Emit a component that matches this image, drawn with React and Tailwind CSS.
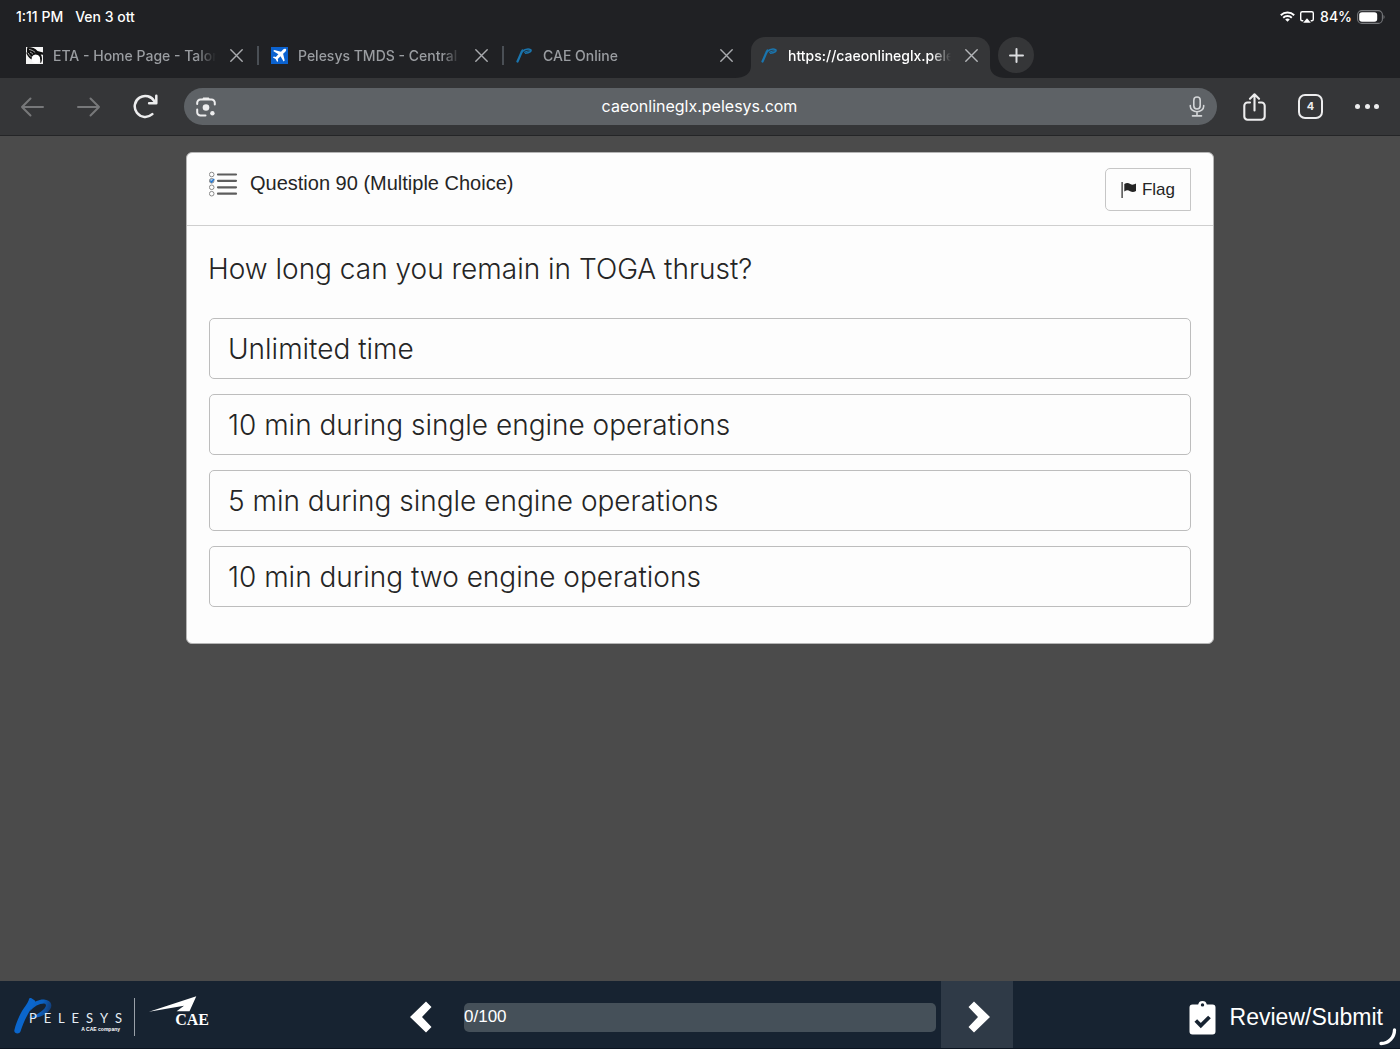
const tabs = [
  { title: 'ETA - Home Page - Talon', icon: 'eta', active: false, separator: true },
  { title: 'Pelesys TMDS - Central', icon: 'plane', active: false, separator: true },
  { title: 'CAE Online', icon: 'pelesys', active: false, separator: false },
  { title: 'https://caeonlineglx.pelesys', icon: 'pelesys', active: true, separator: false },
];

const answers = [
  'Unlimited time',
  '10 min during single engine operations',
  '5 min during single engine operations',
  '10 min during two engine operations',
];

function Favicon({ name }) {
  if (name === 'eta') {
    return (
      <svg className="size-[17px] shrink-0" viewBox="0 0 17 17" aria-hidden="true">
        <rect width="17" height="17" fill="#f4f4f4" />
        <path d="M1.500 0C6 0 9.500 1.500 11.500 4L17 5.500v2.300l-2.300-.2c1.600 2.300 1.800 5.400.3 8.400l-.8-.5C15 11 12.500 7.500 9.500 7.600 7 7.800 5.800 9.500 5.600 12.500 3 11 1 8.500 0 5l1.300 1.300C.8 4 .8 2 1.500 0z" fill="#111" />
        <path d="M3 2.500c2.500.3 4.700 1.500 6.200 3M2.200 6c1 2 2 3.200 3.400 4M4 5c1.200.6 2.200 1.300 3 2.300" stroke="#ccc" strokeWidth="0.800" fill="none" />
        <circle cx="9.900" cy="12" r="4.100" fill="#fff" />
      </svg>
    );
  }
  if (name === 'plane') {
    return (
      <svg className="size-[17px] shrink-0" viewBox="0 0 17 17" aria-hidden="true">
        <rect width="17" height="17" fill="#0b62cf" />
        <path d="M14.900 2.100c-.8-.7-2-.3-2.800.5L10 4.700 3.300 3 2.200 4l5.200 3.200-2.600 2.700-2-.4-.9.9 2.700 1.600 1.600 2.900.9-.9-.3-2.100 2.700-2.600 3.100 5.300 1.100-1.100-1.600-6.700 2.200-2.100c.8-.8 1.200-1.900.6-2.600z" fill="#fff" />
      </svg>
    );
  }
  return (
    <svg className="size-[17px] shrink-0" viewBox="0 0 17 17" fill="none" stroke="#1a75ae" strokeLinecap="round" aria-hidden="true">
      <path d="M1.500 14.500C3.200 11 4.500 7 6.500 3.500" strokeWidth="2.300" />
      <path d="M5.500 4.800C8.500 2.500 12.500 1.600 14.600 2.600c1.500 1.400-1.300 3.600-5 3.700" strokeWidth="1.600" />
      <path d="M8.500 5.300c2-1.200 3.500-1.700 5-1.600" strokeWidth="1.100" />
    </svg>
  );
}

function CloseIcon() {
  return (
    <svg className="size-[13px]" viewBox="0 0 13 13" fill="none" stroke="currentColor" strokeWidth="1.400" strokeLinecap="round" aria-hidden="true">
      <path d="M.8.8l11.400 11.400M12.200.8L.8 12.200" />
    </svg>
  );
}

function Tab({ tab }) {
  return (
    <div
      className={
        tab.active
          ? 'relative mr-[6px] flex h-[41px] w-[239px] shrink-0 items-center rounded-t-[14px] bg-[#353638] pr-3 pb-1 pl-[10px] text-white'
          : 'flex h-[41px] w-[245px] shrink-0 items-center pr-[2px] pb-1 pl-[10px] text-[#9a9da1]'
      }
    >
      {tab.active && (
        <>
          <svg className="absolute bottom-0 -left-4 h-3 w-4" viewBox="0 0 16 12" aria-hidden="true">
            <path d="M0 12C9 12 16 8 16 0v12z" fill="#353638" />
          </svg>
          <svg className="absolute -right-4 bottom-0 h-3 w-4" viewBox="0 0 16 12" aria-hidden="true">
            <path d="M16 12C7 12 0 8 0 0v12z" fill="#353638" />
          </svg>
        </>
      )}
      <Favicon name={tab.icon} />
      <a href="#tab" className="ml-[10px] w-[163px] shrink-0 overflow-hidden text-[14px] font-medium whitespace-nowrap [mask-image:linear-gradient(to_right,black_88%,transparent)]">
        {tab.title}
      </a>
      <button type="button" aria-label={'Close ' + tab.title} className={tab.active ? 'ml-[14px] text-[#b4b6b9]' : 'ml-[14px] text-[#a9abae]'}>
        <CloseIcon />
      </button>
      {tab.separator && <span className="ml-[14px] h-[19px] w-[2px] bg-[#4a4f55]" />}
    </div>
  );
}

function StatusBar() {
  return (
    <div className="flex h-[33px] items-center justify-between pr-[15px] pl-4 text-[14px] font-medium text-white">
      <div className="flex gap-3">
        <span>1:11 PM</span>
        <span>Ven 3 ott</span>
      </div>
      <div className="flex items-center">
        <svg className="h-[11px] w-[15px]" viewBox="0 0 15 11" fill="none" stroke="#fff" aria-hidden="true">
          <path d="M.8 4.200a9.600 9.600 0 0 1 13.400 0" strokeWidth="1.900" />
          <path d="M3.200 6.800a6.200 6.200 0 0 1 8.600 0" strokeWidth="1.900" />
          <path d="M7.500 10.800L5.200 8.600a3.300 3.300 0 0 1 4.600 0z" fill="#fff" stroke="none" />
        </svg>
        <svg className="ml-[5px] h-[12px] w-[14px]" viewBox="0 0 14 12" fill="none" aria-hidden="true">
          <path d="M3.300 9.700H2.200A1.500 1.500 0 0 1 .7 8.200v-6A1.500 1.500 0 0 1 2.200.7h9.600a1.500 1.500 0 0 1 1.500 1.500v6a1.500 1.500 0 0 1-1.500 1.500h-1.100" stroke="#fff" strokeWidth="1.400" />
          <path d="M7 7.300L10.800 11.800H3.200z" fill="#fff" />
        </svg>
        <span className="ml-[6px]">84%</span>
        <svg className="ml-[5px] h-[14px] w-[28px]" viewBox="0 0 28 14" aria-hidden="true">
          <rect x=".6" y=".6" width="24.800" height="12.800" rx="4.200" fill="none" stroke="#77797c" strokeWidth="1.100" />
          <rect x="2.200" y="2.200" width="18" height="9.600" rx="2.800" fill="#fff" />
          <path d="M26.500 5v4c1.400-.5 1.400-3.500 0-4z" fill="#77797c" />
        </svg>
      </div>
    </div>
  );
}

function Toolbar() {
  return (
    <div className="flex h-[58px] items-center border-b border-[#242527] bg-[#353638] pr-[21px] pl-[20px] text-[#ededee]">
      <button type="button" aria-label="Back" className="text-[#77787a]">
        <svg className="h-[20px] w-[25px]" viewBox="0 0 25 20" fill="none" stroke="currentColor" strokeWidth="2" strokeLinecap="round" strokeLinejoin="round" aria-hidden="true">
          <path d="M23 10H2M10.500 1.500L2 10l8.500 8.500" />
        </svg>
      </button>
      <button type="button" aria-label="Forward" className="ml-[31px] text-[#77787a]">
        <svg className="h-[20px] w-[25px]" viewBox="0 0 25 20" fill="none" stroke="currentColor" strokeWidth="2" strokeLinecap="round" strokeLinejoin="round" aria-hidden="true">
          <path d="M2 10h21M14.500 1.500L23 10l-8.500 8.500" />
        </svg>
      </button>
      <button type="button" aria-label="Reload" className="ml-[32px]">
        <svg className="size-[25px]" viewBox="0 0 25 25" fill="none" stroke="currentColor" strokeWidth="2.500" strokeLinecap="round" strokeLinejoin="round" aria-hidden="true">
          <path d="M19.300 20.200A10.500 10.500 0 1 1 21.500 7.500" />
          <path d="M23.300 1.800v7.500h-7.200" />
        </svg>
      </button>
      <div className="ml-[26px] flex h-[37px] flex-1 items-center rounded-full bg-[#5e6266] pr-[12px] pl-[12px]">
        <button type="button" aria-label="Search with camera">
          <svg className="size-[20px]" viewBox="0 0 20 20" fill="none" stroke="currentColor" strokeWidth="2" strokeLinecap="round" aria-hidden="true">
            <path d="M1.200 7V5.800a3.300 3.300 0 0 1 3.300-3.300h11a3.300 3.300 0 0 1 3.300 3.300V7.500M1.200 12.500v2.700a3.300 3.300 0 0 0 3.300 3.300H9.500" />
            <path d="M6 2.800L7.200.6h5.600L14 2.800z" fill="currentColor" stroke="none" />
            <circle cx="10" cy="10.500" r="3.300" fill="currentColor" stroke="none" />
            <circle cx="16.400" cy="16.300" r="2.200" fill="currentColor" stroke="none" />
          </svg>
        </button>
        <input
          type="text"
          aria-label="Address"
          defaultValue="caeonlineglx.pelesys.com"
          className="min-w-0 flex-1 bg-transparent pr-[6px] pb-[2px] text-center text-[16px] text-white outline-none"
        />
        <button type="button" aria-label="Voice search" className="text-[#d3d5d7]">
          <svg className="h-[21px] w-[16px]" viewBox="0 0 16 21" fill="none" stroke="currentColor" strokeWidth="1.600" strokeLinecap="round" aria-hidden="true">
            <rect x="4.800" y="1" width="6.400" height="12" rx="3.200" />
            <path d="M1.300 9.500v.8a6.700 5.500 0 0 0 13.400 0v-.8M8 16v3.700M3.500 19.900h9" />
          </svg>
        </button>
      </div>
      <button type="button" aria-label="Share" className="ml-[26px]">
        <svg className="h-[28px] w-[23px]" viewBox="0 0 23 28" fill="none" stroke="currentColor" strokeWidth="2.100" strokeLinecap="round" strokeLinejoin="round" aria-hidden="true">
          <path d="M7 9.500H4.500A3.200 3.200 0 0 0 1.300 12.700v10.800a3.200 3.200 0 0 0 3.200 3.200h14a3.200 3.200 0 0 0 3.200-3.200V12.700a3.200 3.200 0 0 0-3.200-3.200H16M11.500 17.500V1.500M7 5.800l4.500-4.500L16 5.800" />
        </svg>
      </button>
      <button type="button" aria-label="4 open tabs" className="ml-[32px] flex size-[25px] items-center justify-center rounded-[7px] border-2 border-[#ededee] text-[11px] font-bold">
        4
      </button>
      <button type="button" aria-label="Menu" className="ml-[32px] flex w-[24px] justify-between">
        <span className="size-[5px] rounded-full bg-[#ededee]" />
        <span className="size-[5px] rounded-full bg-[#ededee]" />
        <span className="size-[5px] rounded-full bg-[#ededee]" />
      </button>
    </div>
  );
}

function QuestionIcon() {
  return (
    <svg className="mt-[18px] h-[26px] w-[30px] shrink-0" viewBox="0 0 30 26" fill="none" aria-hidden="true">
      <g stroke="#8b8b8b" strokeWidth="1">
        <circle cx="2.700" cy="3.500" r="2.300" />
        <circle cx="2.700" cy="9.800" r="2.300" fill="#9cc9f5" />
        <circle cx="2.700" cy="16.300" r="2.300" />
        <circle cx="2.700" cy="22.700" r="2.300" />
      </g>
      <path d="M1.300 9.600l1.300 1.600 2.600-3.300" stroke="#2877cc" strokeWidth="1.400" />
      <path d="M9 3.500h18M9 9.800h18M9 16.300h18M9 22.700h18" stroke="#5d5d5d" strokeWidth="2.200" strokeLinecap="round" />
    </svg>
  );
}

function PelesysLogo() {
  return (
    <div className="relative h-[40px] w-[108px]" role="img" aria-label="Pelesys">
      <svg className="absolute top-0 left-0 h-[38px] w-[40px]" viewBox="0 0 40 38" aria-hidden="true">
        <defs>
          <linearGradient id="loop" x1="0" y1="0" x2="1" y2="0.300">
            <stop offset="0" stopColor="#0b66cc" />
            <stop offset="0.600" stopColor="#0b62c4" />
            <stop offset="1" stopColor="#123f7c" />
          </linearGradient>
        </defs>
        <path d="M16 14C20 9.500 25 6.500 30 6.500c2.500.3 2.500 2.500.5 5C27.500 15 22 18.500 15 20.500c8 1.500 17-2 21-8 3-4.500 1-9-5-9.800C26 2 20.500 4.500 17.500 8z" fill="url(#loop)" />
        <path d="M14.800 3c.2-1.800 1.400-2.400 3-1.500l2.700 1.800c1 .7 1 1.700.5 2.700C16 13 10 23 6.500 34.500 5.500 37.500 0 37 .3 33.500 2 26 4.500 20.500 8 14c2.300-4 5.500-7 6.800-11z" fill="#0b66cc" />
      </svg>
      <div className="relative flex justify-between pt-[12px] pl-[15px] font-[Lato,sans-serif] text-[13px] leading-[18px] text-[#e6edf4]">
        <span>P</span><span>E</span><span>L</span><span>E</span><span>S</span><span>Y</span><span>S</span>
      </div>
      <div className="relative pr-[2px] text-right text-[5px] leading-[4px] font-bold whitespace-nowrap text-white">A CAE company</div>
    </div>
  );
}

function CaeLogo() {
  return (
    <div className="relative h-[34px] w-[60px]" role="img" aria-label="CAE">
      <svg className="absolute top-0 left-0 h-[18px] w-[49px]" viewBox="0 0 49 18" aria-hidden="true">
        <path d="M0 15.800L47.300.3 40.500 15.300H27.600L35 9.800z" fill="#fff" />
      </svg>
      <div className="relative pt-[15px] text-right font-['Liberation_Serif',serif] text-[16px] leading-[18px] font-bold text-white">CAE</div>
    </div>
  );
}

function Footer() {
  return (
    <footer className="grid h-[68px] grid-cols-[1fr_626px_1fr] border-b border-[#0b1420] bg-[#172331] text-white">
      <div className="flex items-center pt-[5px] pl-[14px]">
        <PelesysLogo />
        <span className="ml-[12px] h-[38px] w-px bg-[#9aa1a9]" />
        <div className="ml-[14px] pb-[8px]">
          <CaeLogo />
        </div>
      </div>
      <div className="flex items-center">
        <button type="button" aria-label="Previous question" className="mr-[5px] flex h-full w-[72px] items-center justify-center pt-[5px] pr-[5px]">
          <svg className="h-[32px] w-[22px]" viewBox="0 0 22 32" fill="#fff" aria-hidden="true">
            <path d="M0 16L16 .5l5.500 5.500L12 16l9.500 10-5.500 5.500z" />
          </svg>
        </button>
        <div role="progressbar" aria-label="Answered questions" aria-valuenow={0} aria-valuemin={0} aria-valuemax={100} className="mt-[5px] flex h-[29px] flex-1 items-center rounded-[5px] bg-[#455059] text-[17px]">
          0/100
        </div>
        <button type="button" aria-label="Next question" className="ml-[5px] flex h-full w-[72px] items-center justify-center bg-[#2f3a47] pt-[5px] pl-[4px]">
          <svg className="h-[32px] w-[22px]" viewBox="0 0 22 32" fill="#fff" aria-hidden="true">
            <path d="M22 16L6 .5.500 6 10 16 .5 26 6 31.500z" />
          </svg>
        </button>
      </div>
      <div className="relative flex items-center justify-end pt-[5px] pr-[17px]">
        <button type="button" className="flex items-center gap-[14px] text-[23px]">
          <svg className="h-[35px] w-[27px]" viewBox="0 0 27 35" aria-hidden="true">
            <path fillRule="evenodd" d="M3.500 4.500h5.700a4.400 4.400 0 0 1 8.600 0h5.700a3 3 0 0 1 3 3v24a3 3 0 0 1-3 3h-20a3 3 0 0 1-3-3v-24a3 3 0 0 1 3-3zM13.500 3.200a1.700 1.700 0 1 0 0 3.400 1.700 1.700 0 0 0 0-3.400z" fill="#fff" />
            <path d="M6.800 20.500l5 5 8.700-8.500" fill="none" stroke="#172331" strokeWidth="3.800" />
          </svg>
          Review/Submit
        </button>
        <svg className="absolute right-[3px] bottom-[2px] size-[18px]" viewBox="0 0 18 18" fill="none" aria-hidden="true">
          <path d="M2 15.500C10 15.500 15.500 9 15.500 2" stroke="#fff" strokeWidth="3.300" strokeLinecap="round" />
        </svg>
      </div>
    </footer>
  );
}

export default function App() {
  return (
    <div className="flex min-h-screen flex-col bg-[#4b4b4b] font-['Liberation_Sans',Arial,sans-serif]">
      <header className="bg-[#202124] font-[Inter,sans-serif]">
        <StatusBar />
        <nav aria-label="Browser tabs" className="flex h-[45px] items-end pl-4">
          {tabs.map((tab, i) => (
            <Tab key={i} tab={tab} />
          ))}
          <button type="button" aria-label="New tab" className="mb-[5px] ml-[2px] flex size-[36px] items-center justify-center rounded-full bg-[#353638] text-[#dcdde0]">
            <svg className="size-[15px]" viewBox="0 0 15 15" fill="none" stroke="currentColor" strokeWidth="2" strokeLinecap="round" aria-hidden="true">
              <path d="M7.500 1v13M1 7.500h13" />
            </svg>
          </button>
        </nav>
        <Toolbar />
      </header>

      <main className="flex-1 px-4 pt-4 pb-8 text-[#252525]">
        <section className="mx-auto max-w-[1028px] rounded-[6px] border border-[#b5b5b5] bg-[#fdfdfd] pb-[36px]">
          <div className="flex h-[73px] items-start border-b border-[#cfcfcf] px-[22px]">
            <QuestionIcon />
            <h1 className="mt-[18px] ml-[11px] flex-1 text-[20px] leading-6">Question 90 (Multiple Choice)</h1>
            <button type="button" className="mt-[15px] flex h-[43px] w-[86px] items-center justify-center gap-[5px] rounded-l-[5px] border border-[#c6c6c6] text-[17px]">
              <svg className="h-[16px] w-[16px]" viewBox="0 0 16 16" fill="#252525" aria-hidden="true">
                <path d="M.5 0h1.200v16H.5zM3.300 2c2.500-1.700 4-1.200 6 0s3.500.6 5.700-.5v7.500c-2.200 1.300-3.900 1.300-5.900.2s-3.400-1.200-5.800.3z" />
              </svg>
              Flag
            </button>
          </div>
          <h2 className="mt-[23px] px-[21px] font-[Inter,sans-serif] text-[28px] leading-[40px] font-light">How long can you remain in TOGA thrust?</h2>
          <div className="mt-[29px] flex flex-col gap-[15px] px-[22px]">
            {answers.map((answer) => (
              <button
                key={answer}
                type="button"
                className="h-[61px] rounded-[5px] border border-[#bdbdbd] pl-[18px] text-left font-[Inter,sans-serif] text-[28px] leading-[40px] font-light"
              >
                {answer}
              </button>
            ))}
          </div>
        </section>
      </main>

      <Footer />
    </div>
  );
}
